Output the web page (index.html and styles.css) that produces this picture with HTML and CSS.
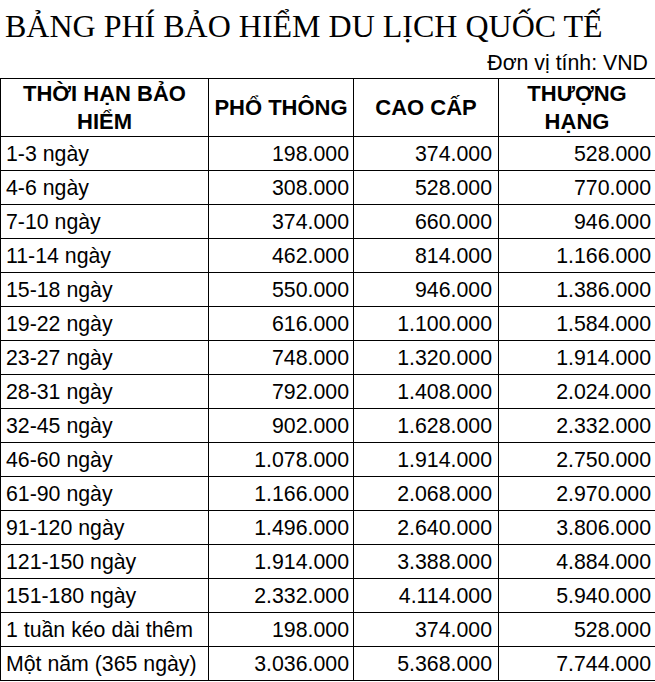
FILE: index.html
```html
<!DOCTYPE html>
<html lang="vi">
<head>
<meta charset="utf-8">
<title>Bảng phí bảo hiểm du lịch quốc tế</title>
<link rel="stylesheet" href="styles.css">
</head>
<body>
<h1 class="title">BẢNG PHÍ BẢO HIỂM DU LỊCH QUỐC TẾ</h1>
<div class="unit">Đơn vị tính: VND</div>
<table class="fees">
  <colgroup>
    <col class="c1"><col class="c2"><col class="c3"><col class="c4">
  </colgroup>
  <thead>
    <tr>
      <th>THỜI HẠN BẢO<br>HIỂM</th>
      <th>PHỔ THÔNG</th>
      <th>CAO CẤP</th>
      <th>THƯỢNG<br>HẠNG</th>
    </tr>
  </thead>
  <tbody>
    <tr><td>1-3 ngày</td><td class="n">198.000</td><td class="n n3">374.000</td><td class="n">528.000</td></tr>
    <tr><td>4-6 ngày</td><td class="n">308.000</td><td class="n n3">528.000</td><td class="n">770.000</td></tr>
    <tr><td>7-10 ngày</td><td class="n">374.000</td><td class="n n3">660.000</td><td class="n">946.000</td></tr>
    <tr><td>11-14 ngày</td><td class="n">462.000</td><td class="n n3">814.000</td><td class="n">1.166.000</td></tr>
    <tr><td>15-18 ngày</td><td class="n">550.000</td><td class="n n3">946.000</td><td class="n">1.386.000</td></tr>
    <tr><td>19-22 ngày</td><td class="n">616.000</td><td class="n n3">1.100.000</td><td class="n">1.584.000</td></tr>
    <tr><td>23-27 ngày</td><td class="n">748.000</td><td class="n n3">1.320.000</td><td class="n">1.914.000</td></tr>
    <tr><td>28-31 ngày</td><td class="n">792.000</td><td class="n n3">1.408.000</td><td class="n">2.024.000</td></tr>
    <tr><td>32-45 ngày</td><td class="n">902.000</td><td class="n n3">1.628.000</td><td class="n">2.332.000</td></tr>
    <tr><td>46-60 ngày</td><td class="n">1.078.000</td><td class="n n3">1.914.000</td><td class="n">2.750.000</td></tr>
    <tr><td>61-90 ngày</td><td class="n">1.166.000</td><td class="n n3">2.068.000</td><td class="n">2.970.000</td></tr>
    <tr><td>91-120 ngày</td><td class="n">1.496.000</td><td class="n n3">2.640.000</td><td class="n">3.806.000</td></tr>
    <tr><td>121-150 ngày</td><td class="n">1.914.000</td><td class="n n3">3.388.000</td><td class="n">4.884.000</td></tr>
    <tr><td>151-180 ngày</td><td class="n">2.332.000</td><td class="n n3">4.114.000</td><td class="n">5.940.000</td></tr>
    <tr><td>1 tuần kéo dài thêm</td><td class="n">198.000</td><td class="n n3">374.000</td><td class="n">528.000</td></tr>
    <tr><td>Một năm (365 ngày)</td><td class="n">3.036.000</td><td class="n n3">5.368.000</td><td class="n">7.744.000</td></tr>
  </tbody>
</table>
</body>
</html>
```

FILE: styles.css
```css
html, body {
  margin: 0;
  padding: 0;
  background: #ffffff;
  color: #000000;
}

body {
  width: 655px;
  font-family: "Liberation Sans", Arial, sans-serif;
}

.title {
  margin: 0;
  padding: 4px 0 0 5px;
  height: 45px;
  line-height: 45px;
  font-family: "Liberation Serif", "Times New Roman", serif;
  font-weight: normal;
  font-size: 32px;
  white-space: nowrap;
}

.unit {
  height: 29px;
  line-height: 29px;
  font-size: 21.3px;
  text-align: right;
  padding-right: 7px;
}

.fees {
  border-collapse: collapse;
  table-layout: fixed;
  width: 655px;
  font-size: 21.3px;
}

.c1 { width: 208px; }
.c2 { width: 145px; }
.c3 { width: 145px; }
.c4 { width: 157px; }

.fees th,
.fees td {
  border: 1px solid #000000;
  padding: 0;
  white-space: nowrap;
  overflow: hidden;
}

.fees th {
  height: 57px;
  line-height: 28px;
  font-size: 22px;
  font-weight: bold;
  text-align: center;
  vertical-align: middle;
}

.fees td {
  height: 31px;
  padding: 2px 4px 0 5px;
  line-height: 31px;
  text-align: left;
  vertical-align: top;
}

.fees td.n {
  text-align: right;
  padding-left: 0;
  padding-right: 4px;
}

.fees td.n3 {
  padding-right: 6px;
}
```
